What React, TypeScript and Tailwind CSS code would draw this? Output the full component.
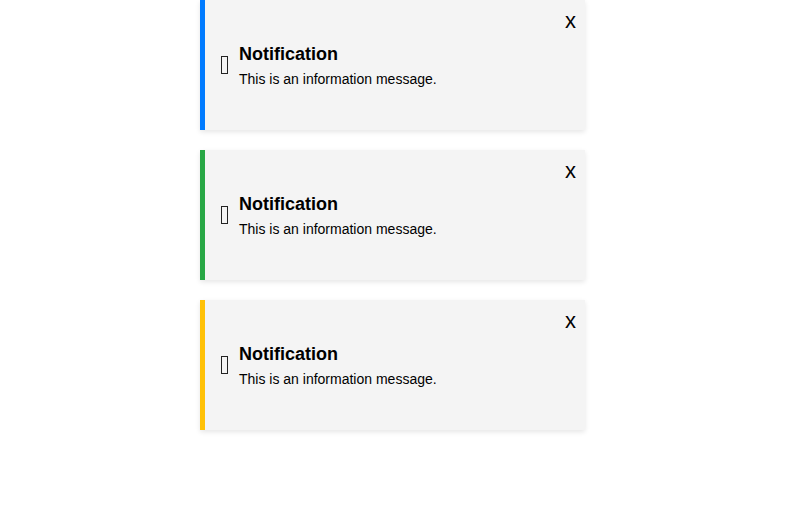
interface NoticeProps {
  accent: string;
  title: string;
  message: string;
}

function Notice({ accent, title, message }: NoticeProps) {
  return (
    <div
      className={`relative flex h-[130px] w-[385px] items-start border-l-[5px] bg-[#f4f4f4] pl-[16px] pr-[15px] pt-[43px] shadow-[0_2px_5px_rgba(0,0,0,0.1)] ${accent}`}
    >
      <span className="mr-[11px] mt-[13px] box-border h-[18px] w-[7px] shrink-0 border border-[#222]" />
      <div className="flex flex-col">
        <div className="text-[18px] font-bold leading-[22px] text-black">{title}</div>
        <div className="mt-[5px] text-[14px] leading-[18px] text-black">{message}</div>
      </div>
      <button className="absolute right-[9px] top-[7px] text-[22px] leading-[28px] text-black">x</button>
    </div>
  );
}

export default function App() {
  return (
    <div className="flex min-h-[520px] w-full flex-col items-center gap-[20px] bg-white font-['Liberation_Sans',Arial,sans-serif]">
      <Notice accent="border-[#007bff]" title="Notification" message="This is an information message." />
      <Notice accent="border-[#28a745]" title="Notification" message="This is an information message." />
      <Notice accent="border-[#ffc107]" title="Notification" message="This is an information message." />
    </div>
  );
}
